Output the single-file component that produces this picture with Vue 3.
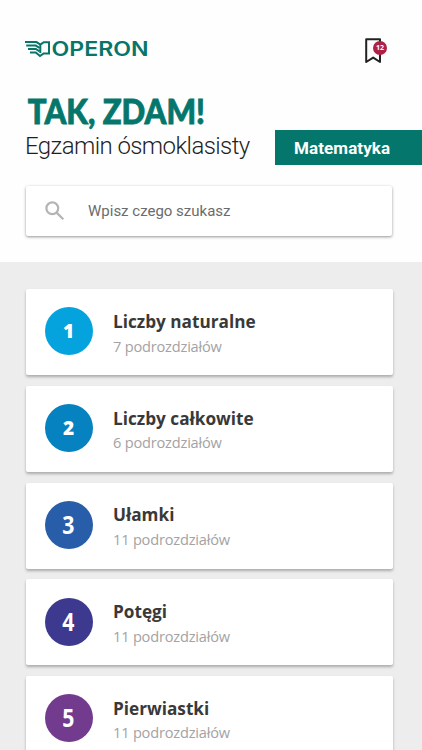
<script setup>
const chapters = [
  { n: 1, title: 'Liczby naturalne', count: '7 podrozdziałów', color: '#05a3dd' },
  { n: 2, title: 'Liczby całkowite', count: '6 podrozdziałów', color: '#0582bf' },
  { n: 3, title: 'Ułamki', count: '11 podrozdziałów', color: '#285da9' },
  { n: 4, title: 'Potęgi', count: '11 podrozdziałów', color: '#3d398f' },
  { n: 5, title: 'Pierwiastki', count: '11 podrozdziałów', color: '#733b8d' },
]
</script>

<template>
  <main class="screen">
    <header class="header">
      <div class="topbar">
        <svg class="logo" width="126" height="26" viewBox="0 -3 126 26">
          <g fill="none" stroke="#087568" stroke-width="2">
            <path d="M0 3.1H11.5L15 5.4" />
            <path d="M1.2 6.6H10.8L14.6 9" />
            <path d="M3 10H10.8L14.6 12.4" />
            <path d="M5 13.4H10.8L15 17L18.6 14.4H24V3.2H18.8L15.3 5.6V14" />
          </g>
          <text x="26.5" y="16.6" textLength="97" lengthAdjust="spacingAndGlyphs">OPERON</text>
        </svg>
        <div class="bookmark">
          <svg width="18" height="27" viewBox="0 0 18 27">
            <path d="M1.2 2.2H15V25L8.2 20.6L1.2 25Z" fill="none" stroke="#222" stroke-width="2" stroke-linejoin="round" />
          </svg>
          <span class="badge">12</span>
        </div>
      </div>
      <div class="headline">
        <div class="titles">
          <h1>TAK, ZDAM!</h1>
          <h2>Egzamin ósmoklasisty</h2>
        </div>
        <div class="subject">Matematyka</div>
      </div>
      <div class="search">
        <svg width="20" height="20" viewBox="0 0 20 20" fill="none" stroke="#b4b4b4" stroke-width="2.2">
          <circle cx="7.3" cy="7.3" r="5.9" />
          <path d="M11.6 11.6L18.3 18.3" />
        </svg>
        <span>Wpisz czego szukasz</span>
      </div>
    </header>
    <section class="list">
      <article v-for="c in chapters" :key="c.n" class="card">
        <div class="circle" :style="{ background: c.color }">
          <span :class="['digit', { tall: c.n > 2 }]">{{ c.n }}</span>
        </div>
        <div class="info">
          <h3>{{ c.title }}</h3>
          <p>{{ c.count }}</p>
        </div>
      </article>
    </section>
  </main>
</template>

<style>
body {
  background: #fff;
  overflow: hidden;
}
</style>

<style scoped>
.screen {
  width: 422px;
  height: 750px;
  overflow: hidden;
  display: flex;
  flex-direction: column;
  background: #ededed;
}
h1, h2, h3, p {
  margin: 0;
  white-space: nowrap;
}
.header {
  box-sizing: border-box;
  height: 262px;
  flex: none;
  background: #fefefe;
  padding: 37px 0 0 25px;
}
.topbar {
  display: flex;
  justify-content: space-between;
  height: 28px;
  padding-right: 33px;
}
.logo {
  margin-top: -1px;
}
.logo text {
  font: 600 19.5px Inter, sans-serif;
  fill: #087568;
}
.bookmark {
  position: relative;
  width: 24px;
}
.badge {
  position: absolute;
  left: 8px;
  top: 4px;
  width: 14px;
  height: 14px;
  border-radius: 50%;
  background: #ad2146;
  color: #fff;
  font: 700 7px/14px "Open Sans", sans-serif;
  text-align: center;
}
.headline {
  display: flex;
  justify-content: space-between;
  margin-top: 26px;
  height: 94px;
}
h1 {
  font: 900 33.5px/40px Lato, sans-serif;
  color: #04766b;
  -webkit-text-stroke: 0.8px #04766b;
  padding-left: 3px;
  transform: scaleX(0.93);
  transform-origin: 0 0;
}
h2 {
  font: 300 24px/30px Roboto, sans-serif;
  letter-spacing: -0.58px;
  color: #1f1f1f;
}
.titles {
  width: 230px;
}
.subject {
  box-sizing: border-box;
  width: 147px;
  height: 35px;
  margin-top: 39px;
  padding-left: 19px;
  background: #04766b;
  color: #fff;
  font: 700 17px/36px Roboto, sans-serif;
  letter-spacing: 0.1px;
}
.search {
  box-sizing: border-box;
  display: flex;
  align-items: center;
  gap: 23px;
  width: 366px;
  height: 50px;
  margin-left: 1px;
  margin-top: 1px;
  padding-left: 19px;
  border-radius: 2px;
  background: #fff;
  box-shadow: 0 1px 3px rgba(0, 0, 0, 0.42);
  font: 400 15px/20px Roboto, sans-serif;
  color: #6b6b6b;
}
.search span {
  padding-bottom: 1px;
}
.list {
  display: flex;
  flex-direction: column;
  gap: 10.7px;
  padding: 27.3px 29px 0 26px;
}
.card {
  box-sizing: border-box;
  flex: none;
  display: flex;
  gap: 20px;
  height: 86px;
  padding: 18.2px 0 0 19px;
  border-radius: 2px;
  background: #fff;
  box-shadow: 0 2px 3px rgba(0, 0, 0, 0.28);
}
.circle {
  width: 48px;
  height: 48px;
  border-radius: 50%;
  display: flex;
  align-items: center;
  justify-content: center;
  color: #fff;
}
.digit {
  font: 800 19px/24px "Open Sans", sans-serif;
  padding-right: 1px;
}
.digit.tall {
  font-size: 25px;
  font-weight: 700;
  padding-bottom: 2px;
  transform: scaleX(0.85);
}
h3 {
  font: 700 17.2px/24px "Open Sans", sans-serif;
  color: #393939;
  margin-top: 2.4px;
}
p {
  font: 400 14.6px/20px "Open Sans", sans-serif;
  letter-spacing: -0.2px;
  color: #a3a3a3;
  margin-top: 1.7px;
}
</style>
